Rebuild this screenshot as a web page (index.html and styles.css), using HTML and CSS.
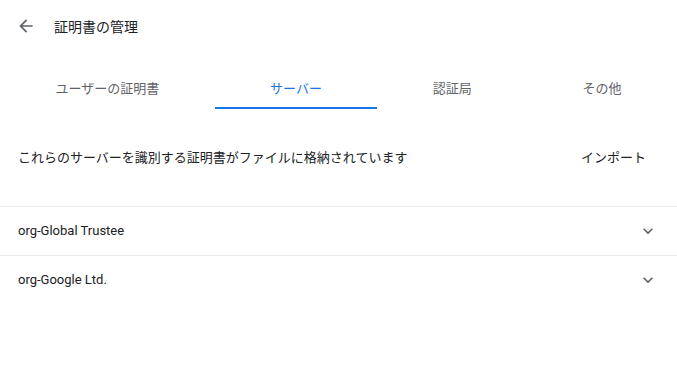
FILE: index.html
```html
<!DOCTYPE html>
<html lang="ja">
<head>
<meta charset="utf-8">
<title>証明書の管理</title>
<link rel="stylesheet" href="styles.css">
</head>
<body>
<div class="page">
  <div class="header">
    <button class="back" aria-label="戻る">
      <svg viewBox="0 0 24 24" width="20" height="20"><path d="M20 11H7.83l5.59-5.59L12 4l-8 8 8 8 1.41-1.41L7.83 13H20v-2z" fill="#5f6368"/></svg>
    </button>
    <h1 class="title">証明書の管理</h1>
  </div>
  <div class="tabs">
    <div class="tab">ユーザーの証明書</div>
    <div class="tab selected">サーバー</div>
    <div class="tab">認証局</div>
    <div class="tab">その他</div>
  </div>
  <div class="desc">
    <span class="desc-text">これらのサーバーを識別する証明書がファイルに格納されています</span>
    <button class="import">インポート</button>
  </div>
  <div class="list">
    <div class="item">
      <span class="item-name">org-Global Trustee</span>
      <svg class="chev" viewBox="0 0 24 24" width="20" height="20"><path d="M16.59 8.59L12 13.17 7.41 8.59 6 10l6 6 6-6z" fill="#5f6368"/></svg>
    </div>
    <div class="item">
      <span class="item-name">org-Google Ltd.</span>
      <svg class="chev" viewBox="0 0 24 24" width="20" height="20"><path d="M16.59 8.59L12 13.17 7.41 8.59 6 10l6 6 6-6z" fill="#5f6368"/></svg>
    </div>
  </div>
</div>
</body>
</html>
```
FILE: styles.css
```css
html, body {
  margin: 0;
  padding: 0;
  background: #ffffff;
}
body {
  font-family: Roboto, "Noto Sans CJK JP", sans-serif;
  font-size: 13px;
  color: #202124;
}
.page {
  width: 677px;
}
.header {
  height: 51px;
  display: flex;
  align-items: center;
  padding-left: 16px;
}
.back {
  width: 20px;
  height: 20px;
  padding: 0;
  border: none;
  background: none;
  display: flex;
  align-items: center;
  justify-content: center;
}
.title {
  margin: 0 0 0 18px;
  font-size: 14px;
  font-weight: 400;
  color: #202124;
}
.tabs {
  margin-top: 18px;
  height: 40px;
  display: flex;
}
.tab {
  flex: 1 1 auto;
  text-align: center;
  color: #5f6368;
  height: 38px;
  line-height: 40px;
  border-bottom: 2px solid transparent;
}
.tab.selected {
  color: #1a73e8;
  border-bottom-color: #1a73e8;
}
.desc {
  margin-top: 23px;
  height: 48px;
  display: flex;
  align-items: center;
  justify-content: space-between;
  padding: 0 15px 0 18px;
}
.desc-text {
  color: #202124;
}
.import {
  border: none;
  background: none;
  font: inherit;
  color: #202124;
  padding: 0 16px;
  height: 32px;
}
.list {
  margin-top: 26px;
}
.item {
  height: 47px;
  padding: 0 19px 1px 18px;
  border-top: 1px solid #e8eaed;
  display: flex;
  align-items: center;
  justify-content: space-between;
}
.item-name {
  color: #202124;
}
.chev {
  display: block;
}
```
